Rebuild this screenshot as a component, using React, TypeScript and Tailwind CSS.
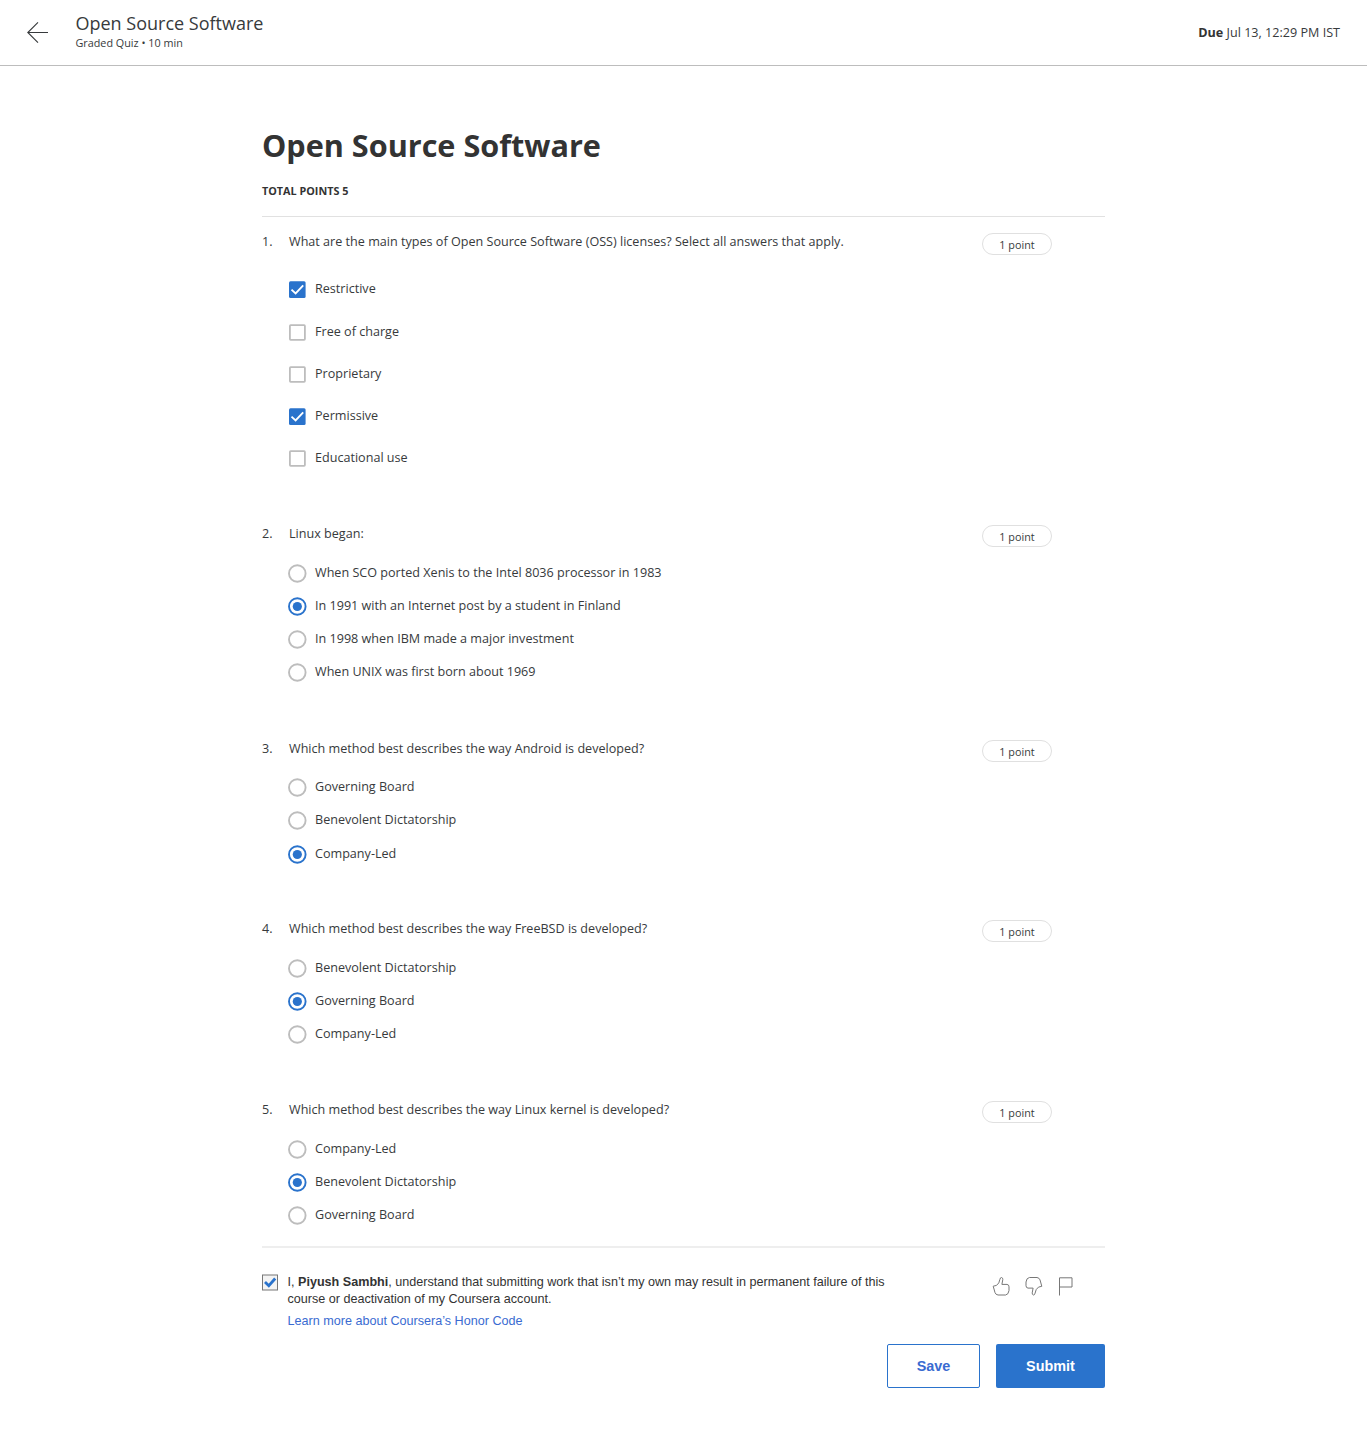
import React from "react";

type Option = { label: string; checked?: boolean };
type Question = {
  prompt: string;
  kind: "checkbox" | "radio";
  height: string;
  options: Option[];
};

const questions: Question[] = [
  {
    prompt:
      "What are the main types of Open Source Software (OSS) licenses? Select all answers that apply.",
    kind: "checkbox",
    height: "h-[292px]",
    options: [
      { label: "Restrictive", checked: true },
      { label: "Free of charge" },
      { label: "Proprietary" },
      { label: "Permissive", checked: true },
      { label: "Educational use" },
    ],
  },
  {
    prompt: "Linux began:",
    kind: "radio",
    height: "h-[214.6px]",
    options: [
      { label: "When SCO ported Xenis to the Intel 8036 processor in 1983" },
      { label: "In 1991 with an Internet post by a student in Finland", checked: true },
      { label: "In 1998 when IBM made a major investment" },
      { label: "When UNIX was first born about 1969" },
    ],
  },
  {
    prompt: "Which method best describes the way Android is developed?",
    kind: "radio",
    height: "h-[180.8px]",
    options: [
      { label: "Governing Board" },
      { label: "Benevolent Dictatorship" },
      { label: "Company-Led", checked: true },
    ],
  },
  {
    prompt: "Which method best describes the way FreeBSD is developed?",
    kind: "radio",
    height: "h-[181px]",
    options: [
      { label: "Benevolent Dictatorship" },
      { label: "Governing Board", checked: true },
      { label: "Company-Led" },
    ],
  },
  {
    prompt: "Which method best describes the way Linux kernel is developed?",
    kind: "radio",
    height: "h-[160.6px]",
    options: [
      { label: "Company-Led" },
      { label: "Benevolent Dictatorship", checked: true },
      { label: "Governing Board" },
    ],
  },
];

function Checkbox({ checked }: { checked?: boolean }) {
  return (
    <svg className="ml-px block h-[17px] w-[17px]" viewBox="0 0 17 17" fill="none">
      {checked ? (
        <>
          <rect x="0" y="0.3" width="16.6" height="16.6" rx="1.5" fill="#2a73cc" />
          <path d="M2.5 8.6 6.6 12.4 14.2 4.4" stroke="#fff" strokeWidth="1.9" />
        </>
      ) : (
        <rect x="0.9" y="1.1" width="15" height="14.8" rx="0.8" stroke="#bdbdbd" strokeWidth="1.8" />
      )}
    </svg>
  );
}

function Radio({ checked }: { checked?: boolean }) {
  return (
    <svg className="block h-[19px] w-[19px]" viewBox="0 0 19 19" fill="none">
      <circle cx="9.3" cy="9.5" r="8.3" stroke={checked ? "#2a73cc" : "#bdbdbd"} strokeWidth="1.9" />
      {checked && <circle cx="9.3" cy="9.5" r="4.6" fill="#2a73cc" />}
    </svg>
  );
}

function QuestionBlock({ question, index }: { question: Question; index: number }) {
  const isCheckbox = question.kind === "checkbox";
  return (
    <section className={`flex items-start ${question.height}`}>
      <span className="w-[27px] shrink-0 pt-4 leading-[17px]">{index + 1}.</span>
      <div className="w-[693px] shrink-0 pt-4">
        <p className="leading-[17px]">{question.prompt}</p>
        <div className={isCheckbox ? "pt-[18.8px]" : "pt-[14.6px]"}>
          {question.options.map((option) => (
            <label
              key={option.label}
              className={`-ml-px flex items-center ${isCheckbox ? "h-[42.2px]" : "h-[33.2px]"}`}
            >
              <span className="w-[27px] shrink-0">
                {isCheckbox ? <Checkbox checked={option.checked} /> : <Radio checked={option.checked} />}
              </span>
              <span className="pb-[2px] leading-[17px]">{option.label}</span>
            </label>
          ))}
        </div>
      </div>
      <span className="mt-4 flex h-[22px] w-[70px] items-center justify-center rounded-full border border-[#e0e0e0] pt-[2px] text-[10.8px]">
        1 point
      </span>
    </section>
  );
}

const thumbUp =
  "M1.2 10.2 4.5 9.4Q7.4 7.4 7.9 3.4 8.3 1.4 9.5 1.5 11 1.8 10.8 3.6L9.9 8.4H15Q17 8.6 17 10.8V14.5Q16.5 18.6 13.6 19H6Q3.7 18.7 3 16.6Z";

export default function App() {
  return (
    <div className="h-[1446px] w-[1367px] overflow-hidden bg-white font-['Open_Sans',sans-serif] text-[12.6px] text-[#373a3c]">
      <header className="flex h-[66px] items-center border-b border-[#bdbdbd] pr-[27px] pl-[27px]">
        <svg className="h-[22px] w-[22px]" viewBox="0 0 22 22" fill="none" stroke="#373a3c" strokeWidth="1.1">
          <path d="M21 10.5H.8M11 .4.8 10.5 11 20.7" />
        </svg>
        <div className="ml-[26.5px] pb-[3px]">
          <h2 className="text-[18px] leading-[22px]">Open Source Software</h2>
          <p className="pt-px text-[10.8px] leading-[16px]">Graded Quiz • 10 min</p>
        </div>
        <p className="ml-auto pt-px">
          <b className="font-bold text-[#333]">Due</b> Jul 13, 12:29 PM IST
        </p>
      </header>

      <main className="ml-[262px] w-[843px]">
        <h1 className="pt-[59px] text-[30.6px] leading-[40px] font-bold text-[#333]">Open Source Software</h1>
        <p className="mt-[18px] h-[34px] border-b border-[#e1e1e1] text-[10.8px] leading-4 font-bold text-[#333]">
          TOTAL POINTS 5
        </p>

        {questions.map((question, index) => (
          <QuestionBlock key={question.prompt} question={question} index={index} />
        ))}

        <div className="flex items-start border-t-2 border-[#eeeeee] pt-[26px] font-['Liberation_Sans',sans-serif]">
          <svg className="h-[17px] w-4 shrink-0" viewBox="0 0 16 17" fill="none">
            <rect x="0.5" y="1" width="15" height="15" fill="#f4f4f4" stroke="#777" />
            <path d="M3 8 6.8 11.7 13.2 4.5" stroke="#2a73cc" strokeWidth="2.8" />
          </svg>
          <div className="ml-[9.5px] w-[610px] leading-[17px] text-[#333]">
            <p>
              I, <b>Piyush Sambhi</b>, understand that submitting work that isn’t my own may result in permanent
              failure of this
              <br />
              course or deactivation of my Coursera account.
            </p>
            <a className="mt-[5px] block text-[#3a6bd1]">Learn more about Coursera’s Honor Code</a>
          </div>
          <div className="mt-[2px] ml-[94px] flex items-center text-[#777]">
            <svg className="h-5 w-[18px]" viewBox="0 0 18 20" fill="none" stroke="currentColor">
              <path d={thumbUp} />
            </svg>
            <svg className="ml-[15px] h-5 w-[18px] rotate-180" viewBox="0 0 18 20" fill="none" stroke="currentColor">
              <path d={thumbUp} transform="translate(0 -0.5)" />
            </svg>
            <svg className="ml-4 h-5 w-[14px]" viewBox="0 0 14 20" fill="none" stroke="currentColor">
              <path d="M.5 19.5V1.8h12.5V11H.5" />
            </svg>
          </div>
        </div>

        <div className="mt-[14.4px] flex justify-end gap-4 font-['Liberation_Sans',sans-serif] text-[14.4px] font-bold">
          <button className="h-[44px] w-[93px] rounded-[2px] border border-[#2a73cc] pt-px text-[#3a6bd1]">Save</button>
          <button className="h-[44px] w-[109px] rounded-[2px] bg-[#2a73cc] pt-px text-white">Submit</button>
        </div>
      </main>
    </div>
  );
}
